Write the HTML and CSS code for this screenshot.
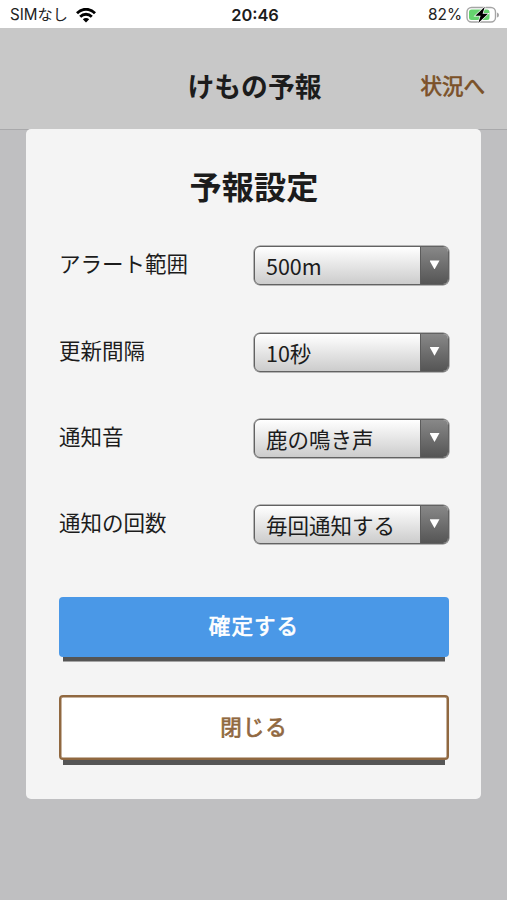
FILE: index.html
```html
<!DOCTYPE html>
<html lang="ja">
<head>
<meta charset="utf-8">
<meta name="viewport" content="width=device-width">
<title>けもの予報</title>
<link rel="stylesheet" href="styles.css">
</head>
<body>
<div class="status">
  <div class="carrier"><span>SIMなし</span>
    <svg class="wifi" width="20" height="15" viewBox="0 0 20 15"><g fill="none" stroke="#000" stroke-width="2.8"><path d="M1 5.2C6-.1 14-.1 19 5.2"/><path d="M4.2 8.7C7.5 5.4 12.5 5.4 15.8 8.7"/></g><path d="M6.8 11.2C8.6 9.5 11.4 9.5 13.2 11.2L10 14.5Z"/></svg>
  </div>
  <div class="clock">20:46</div>
  <div class="power"><span>82%</span>
    <svg class="battery" width="34" height="18" viewBox="0 0 34 18"><rect x="1" y="1.5" width="28.5" height="14.5" rx="4.5" fill="#fff" stroke="#a5a5a5" stroke-width="1.4"/><path d="M31 6.5q2 .5 2 2.5t-2 2.5z" fill="#a5a5a5"/><rect x="3" y="3.5" width="20.5" height="10.5" rx="2.5" fill="#65d36e"/><path d="M18.8 .8 9.3 9.8h5.3L12.3 17l9.7-9.2h-5.4z" stroke="#fff" stroke-width="1.4" fill="#000" paint-order="stroke"/></svg>
  </div>
</div>
<header class="header">
  <h1 class="app-title">けもの予報</h1>
  <a class="header-link">状況へ</a>
</header>
<main class="dialog">
  <h2 class="dialog-title">予報設定</h2>
  <div class="settings">
    <div class="row"><span class="label">アラート範囲</span><div class="select"><span class="value">500m</span><span class="arrow"></span></div></div>
    <div class="row"><span class="label">更新間隔</span><div class="select"><span class="value">10秒</span><span class="arrow"></span></div></div>
    <div class="row"><span class="label">通知音</span><div class="select"><span class="value">鹿の鳴き声</span><span class="arrow"></span></div></div>
    <div class="row"><span class="label">通知の回数</span><div class="select"><span class="value">毎回通知する</span><span class="arrow"></span></div></div>
  </div>
  <button class="button primary">確定する</button>
  <button class="button secondary">閉じる</button>
</main>
</body>
</html>
```
FILE: styles.css
```css
* { box-sizing: border-box; }
body {
  margin: 0;
  height: 900px;
  overflow: hidden;
  background: #bfbfc1;
  color: #1c1c1c;
  font-family: "Noto Sans CJK JP", sans-serif;
}
.status {
  display: grid;
  grid-template-columns: 1fr auto 1fr;
  align-items: center;
  height: 28px;
  padding: 1px 7px 0 10px;
  background: #fff;
  font: 16px/28px Inter, "Noto Sans CJK JP", sans-serif;
}
.carrier, .power { display: flex; align-items: center; }
.carrier { gap: 8px; color: #222; font-size: 15.2px; }
.power { justify-content: flex-end; gap: 4px; color: #222; font-size: 15.4px; }
.clock { font-weight: 600; font-size: 16.4px; }
.header {
  display: grid;
  grid-template-columns: 1fr auto 1fr;
  align-items: center;
  height: 102px;
  padding: 14px 22px 0 24px;
  background: #c8c8c8;
  border-bottom: 1px solid #a9a9ab;
}
.app-title { grid-column: 2; margin: 0; font-size: 26.8px; line-height: 40px; font-weight: 700; }
.header-link {
  justify-self: end;
  margin-bottom: 1px;
  color: #7b5128;
  font-size: 21.5px;
  line-height: 32px;
  -webkit-text-stroke: 0.7px currentColor;
}
.dialog {
  position: relative;
  width: 455px;
  height: 670px;
  margin: -1px 0 0 26.4px;
  padding: 32px 32.4px 33px 32.6px;
  border-radius: 5px;
  background: #f4f4f4;
}
.dialog-title { margin: 0; text-align: center; font-size: 32.2px; line-height: 48px; font-weight: 700; }
.settings { display: flex; flex-direction: column; gap: 46.3px; margin-top: 37.4px; }
.row { display: flex; justify-content: space-between; height: 40px; }
.label { font-size: 21.5px; line-height: 34px; }
.select {
  display: flex;
  width: 195px;
  height: 39px;
  border: 1px solid #626262;
  border-radius: 6px;
  box-shadow: 0 0 0 0.5px #777;
  overflow: hidden;
  background: linear-gradient(#fff, #ccc);
}
.value { flex: 1; padding: 1px 0 0 11px; font-size: 21.5px; line-height: 36px; white-space: nowrap; }
.arrow {
  display: flex;
  justify-content: center;
  width: 28px;
  padding-top: 13px;
  border-left: 1px solid #5c5c5c;
  background: linear-gradient(#888, #555);
}
.arrow::before {
  content: "";
  width: 10px;
  height: 9px;
  background: #fff;
  clip-path: polygon(0 0, 100% 0, 50% 100%);
}
.button {
  display: block;
  width: 100%;
  padding: 0 0 3px;
  border: 0;
  border-radius: 4px;
  font: 400 21.5px/32px "Noto Sans CJK JP", sans-serif;
  letter-spacing: 1.07px;
  -webkit-text-stroke: 0.7px currentColor;
}
.primary {
  height: 60px;
  margin-top: 51.7px;
  background: #4a98e7;
  color: #fff;
  box-shadow: 0 8.5px 0 -4px #555;
}
.secondary {
  height: 65px;
  margin-top: 38px;
  border: 2px solid #906840;
  background: #fff;
  color: #906840;
  box-shadow: inset 0 0 0 0.5px #906840, 0 9px 0 -4px #555;
}
```
